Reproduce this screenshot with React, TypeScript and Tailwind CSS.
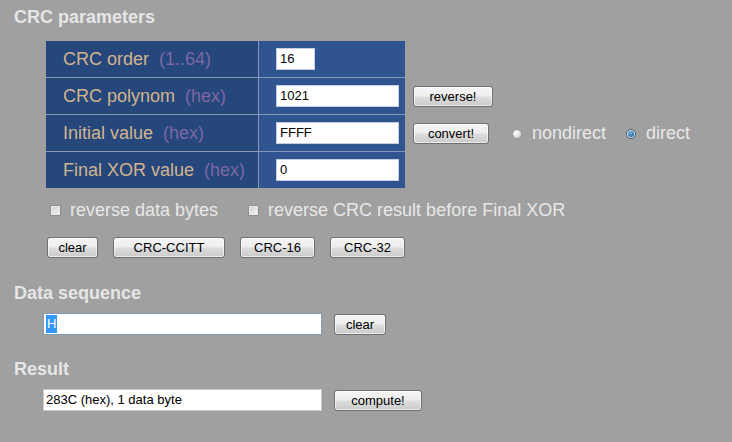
import React from "react";

const btn =
  "h-[21px] rounded-[3px] border border-[#707070] bg-[linear-gradient(to_bottom,#f6f6f6_0%,#ededed_48%,#dddddd_52%,#cbcbcb_100%)] text-[13px] leading-none text-black flex items-center justify-center shadow-[inset_0_0_0_1px_rgba(255,255,255,0.6)]";

function Row({
  label,
  hint,
  input,
  extra,
  last,
}: {
  label: string;
  hint: string;
  input: React.ReactNode;
  extra?: React.ReactNode;
  last?: boolean;
}) {
  return (
    <div className="flex items-center">
      <div
        className={
          last
            ? "flex w-[359px] h-[36px]"
            : "flex w-[359px] h-[37px] border-b border-[#8797b5]"
        }
      >
        <div className="w-[213px] border-r border-[#8797b5] bg-[#25477c] pl-[17px] flex items-center text-[18px] whitespace-nowrap">
          <span className="text-[#d2b48f]">{label}</span>
          <span className="ml-[10px] text-[#7d68a2]">{hint}</span>
        </div>
        <div className="flex-1 bg-[#2f548f] pl-[17px] flex items-center">{input}</div>
      </div>
      {extra}
    </div>
  );
}

function Field({ value, w }: { value: string; w: string }) {
  return (
    <div
      className={`${w} h-[22px] bg-white border border-[#c3cede] pl-[3px] flex items-center text-[13px] text-black`}
    >
      {value}
    </div>
  );
}

function Checkbox() {
  return (
    <span className="inline-block w-[11px] h-[11px] border border-[#8e8f8f] bg-[linear-gradient(135deg,#d0d0d0,#f4f4f4)] shadow-[inset_0_0_0_1px_#eaeaea]" />
  );
}

export default function App() {
  return (
    <div className="w-[732px] h-[442px] overflow-hidden bg-[#a0a0a0] font-['Liberation_Sans',Arial,sans-serif] pt-[6px]">
      <h2 className="ml-[14px] text-[18px] leading-[22px] font-bold text-[#e6e6e6]">
        CRC parameters
      </h2>

      <div className="mt-[13px] ml-[46px] flex flex-col">
        <Row label="CRC order" hint="(1..64)" input={<Field value="16" w="w-[39px]" />} />
        <Row
          label="CRC polynom"
          hint="(hex)"
          input={<Field value="1021" w="w-[123px]" />}
          extra={<button className={`${btn} ml-[8px] w-[80px]`}>reverse!</button>}
        />
        <Row
          label="Initial value"
          hint="(hex)"
          input={<Field value="FFFF" w="w-[123px]" />}
          extra={
            <div className="flex items-center">
              <button className={`${btn} ml-[8px] w-[76px]`}>convert!</button>
              <span className="ml-[23px] w-[10px] h-[10px] rounded-full border border-[#9a9a9a] bg-[radial-gradient(circle_at_40%_35%,#ffffff,#c4c4c4)]" />
              <span className="ml-[10px] text-[18px] text-[#e8e8e8]">nondirect</span>
              <span className="ml-[20px] w-[10px] h-[10px] rounded-full border border-[#3d5670] bg-[#dfe6ee] flex items-center justify-center">
                <span className="w-[6px] h-[6px] rounded-full bg-[radial-gradient(circle_at_40%_35%,#6ec0f0,#0e3d6c)]" />
              </span>
              <span className="ml-[10px] text-[18px] text-[#e8e8e8]">direct</span>
            </div>
          }
        />
        <Row
          label="Final XOR value"
          hint="(hex)"
          input={<Field value="0" w="w-[123px]" />}
          last
        />
      </div>

      <div className="mt-[11px] ml-[50px] h-[22px] flex items-center text-[18px] text-[#e8e8e8]">
        <Checkbox />
        <span className="ml-[9px]">reverse data bytes</span>
        <span className="ml-[30px] flex items-center">
          <Checkbox />
        </span>
        <span className="ml-[9px]">reverse CRC result before Final XOR</span>
      </div>

      <div className="mt-[16px] ml-[47px] flex gap-[15px]">
        <button className={`${btn} w-[51px]`}>clear</button>
        <button className={`${btn} w-[112px]`}>CRC-CCITT</button>
        <button className={`${btn} w-[75px]`}>CRC-16</button>
        <button className={`${btn} w-[75px]`}>CRC-32</button>
      </div>

      <h2 className="mt-[24px] ml-[14px] text-[18px] leading-[22px] font-bold text-[#e6e6e6]">
        Data sequence
      </h2>
      <div className="mt-[9px] ml-[43px] flex items-center gap-[12px]">
        <div className="w-[279px] h-[22px] bg-white border border-[#7f9db9] pl-[2px] flex items-center text-[13px]">
          <span className="bg-[#3399ff] text-white leading-[18px] px-[1px]">H</span>
        </div>
        <button className={`${btn} w-[52px]`}>clear</button>
      </div>

      <h2 className="mt-[23px] ml-[14px] text-[18px] leading-[22px] font-bold text-[#e6e6e6]">
        Result
      </h2>
      <div className="mt-[9px] ml-[43px] flex items-center gap-[12px]">
        <div className="w-[279px] h-[22px] bg-white border border-[#c8c8c8] pl-[2px] flex items-center text-[13px] text-black">
          283C (hex), 1 data byte
        </div>
        <button className={`${btn} w-[88px]`}>compute!</button>
      </div>
    </div>
  );
}
